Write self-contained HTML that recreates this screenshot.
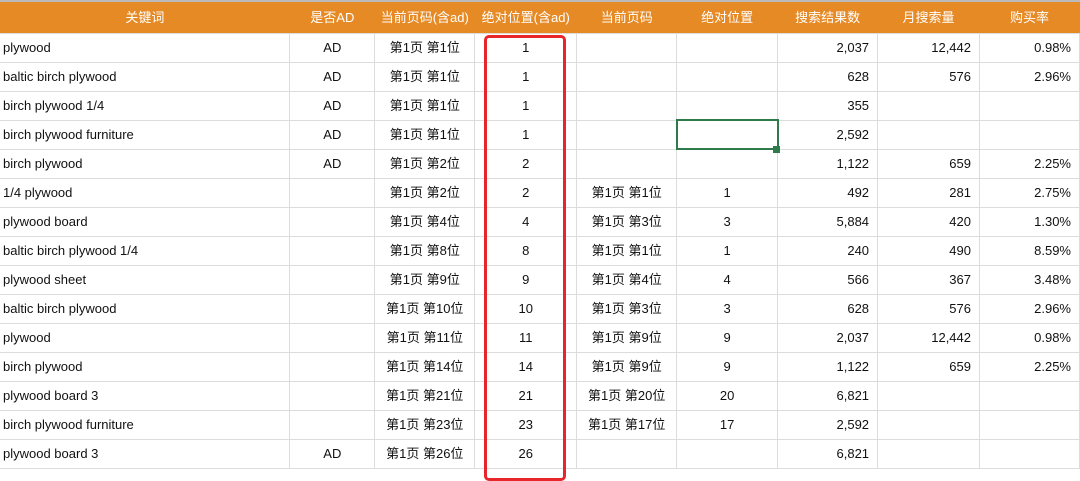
<!DOCTYPE html><html><head><meta charset="utf-8"><style>
body{margin:0;width:1080px;height:465px;overflow:hidden;background:#fff;font-family:"Liberation Sans","Noto Sans CJK SC",sans-serif;font-size:13px;color:#111}
table{border-collapse:collapse;position:absolute;left:0;top:0;table-layout:fixed}
td{height:28px;line-height:16px;border:1px solid #dcdcdc;padding:0 4px;white-space:nowrap;text-align:center}
td:first-child{text-align:left;padding-left:3px;border-left:none}
td.r{text-align:right;padding-right:8px}
th{height:31px;line-height:16px;padding:0;background:#E68A26;color:#fff;font-weight:normal;border:none;border-top:2px solid #bbb;font-size:13px}
#red{position:absolute;left:484px;top:35px;width:76px;height:440px;border:3px solid #e8252a;border-radius:5px}
#grn{position:absolute;left:676px;top:119px;width:99px;height:27px;border:2px solid #2e7a4a}
#h{position:absolute;left:773px;top:146px;width:7px;height:7px;background:#2e7a4a}
</style></head><body>
<table>
<colgroup><col style="width:290px"><col style="width:85px"><col style="width:100px"><col style="width:102px"><col style="width:100px"><col style="width:101px"><col style="width:100px"><col style="width:102px"><col style="width:100px"></colgroup>
<tr><th>关键词</th><th>是否AD</th><th>当前页码(含ad)</th><th>绝对位置(含ad)</th><th>当前页码</th><th>绝对位置</th><th>搜索结果数</th><th>月搜索量</th><th>购买率</th></tr>
<tr><td>plywood</td><td>AD</td><td>第1页 第1位</td><td>1</td><td></td><td></td><td class="r">2,037</td><td class="r">12,442</td><td class="r">0.98%</td></tr>
<tr><td>baltic birch plywood</td><td>AD</td><td>第1页 第1位</td><td>1</td><td></td><td></td><td class="r">628</td><td class="r">576</td><td class="r">2.96%</td></tr>
<tr><td>birch plywood 1/4</td><td>AD</td><td>第1页 第1位</td><td>1</td><td></td><td></td><td class="r">355</td><td></td><td></td></tr>
<tr><td>birch plywood furniture</td><td>AD</td><td>第1页 第1位</td><td>1</td><td></td><td></td><td class="r">2,592</td><td></td><td></td></tr>
<tr><td>birch plywood</td><td>AD</td><td>第1页 第2位</td><td>2</td><td></td><td></td><td class="r">1,122</td><td class="r">659</td><td class="r">2.25%</td></tr>
<tr><td>1/4 plywood</td><td></td><td>第1页 第2位</td><td>2</td><td>第1页 第1位</td><td>1</td><td class="r">492</td><td class="r">281</td><td class="r">2.75%</td></tr>
<tr><td>plywood board</td><td></td><td>第1页 第4位</td><td>4</td><td>第1页 第3位</td><td>3</td><td class="r">5,884</td><td class="r">420</td><td class="r">1.30%</td></tr>
<tr><td>baltic birch plywood 1/4</td><td></td><td>第1页 第8位</td><td>8</td><td>第1页 第1位</td><td>1</td><td class="r">240</td><td class="r">490</td><td class="r">8.59%</td></tr>
<tr><td>plywood sheet</td><td></td><td>第1页 第9位</td><td>9</td><td>第1页 第4位</td><td>4</td><td class="r">566</td><td class="r">367</td><td class="r">3.48%</td></tr>
<tr><td>baltic birch plywood</td><td></td><td>第1页 第10位</td><td>10</td><td>第1页 第3位</td><td>3</td><td class="r">628</td><td class="r">576</td><td class="r">2.96%</td></tr>
<tr><td>plywood</td><td></td><td>第1页 第11位</td><td>11</td><td>第1页 第9位</td><td>9</td><td class="r">2,037</td><td class="r">12,442</td><td class="r">0.98%</td></tr>
<tr><td>birch plywood</td><td></td><td>第1页 第14位</td><td>14</td><td>第1页 第9位</td><td>9</td><td class="r">1,122</td><td class="r">659</td><td class="r">2.25%</td></tr>
<tr><td>plywood board 3</td><td></td><td>第1页 第21位</td><td>21</td><td>第1页 第20位</td><td>20</td><td class="r">6,821</td><td></td><td></td></tr>
<tr><td>birch plywood furniture</td><td></td><td>第1页 第23位</td><td>23</td><td>第1页 第17位</td><td>17</td><td class="r">2,592</td><td></td><td></td></tr>
<tr><td>plywood board 3</td><td>AD</td><td>第1页 第26位</td><td>26</td><td></td><td></td><td class="r">6,821</td><td></td><td></td></tr>
</table>
<div id="red"></div><div id="grn"></div><div id="h"></div>
</body></html>
